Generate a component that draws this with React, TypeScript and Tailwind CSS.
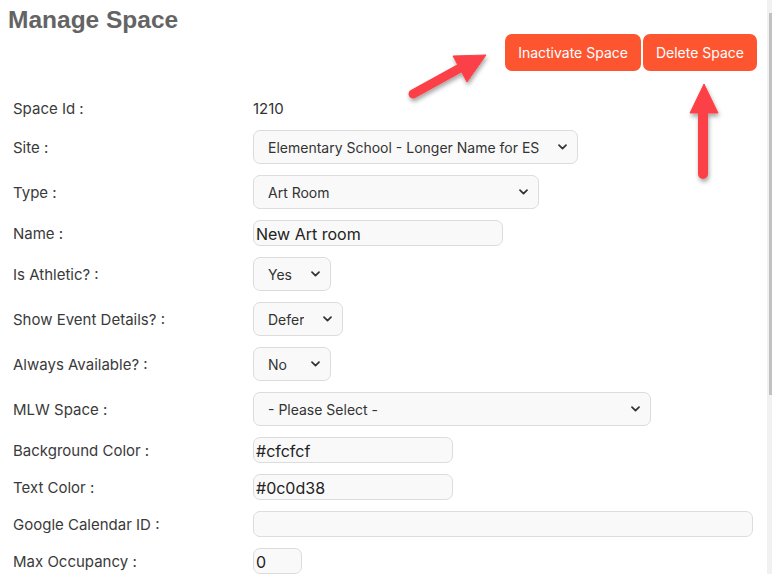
import React from "react";

const labelCls = "w-[240px] shrink-0 pt-[2px] text-[15px] text-[#3a3a3a]";

function Chevron() {
  return (
    <svg width="9" height="6" viewBox="0 0 9 6" className="shrink-0">
      <path d="M1 1.2l3.5 3.5 3.5-3.5" fill="none" stroke="#333" strokeWidth="1.7" strokeLinecap="round" strokeLinejoin="round" />
    </svg>
  );
}

function FakeSelect({ value, width }: { value: string; width: string }) {
  return (
    <div
      className={`${width} h-[34px] flex items-center justify-between pl-[14px] pr-[10px] border border-[#dcdcdc] rounded-[7px] bg-[#f9f9f9] text-[14px] text-[#333]`}
    >
      <span className="truncate pt-px">{value}</span>
      <Chevron />
    </div>
  );
}

function FakeInput({ value, width }: { value: string; width: string }) {
  return (
    <div
      className={`${width} h-[26px] flex items-center px-[2px] pt-px border border-[#dcdcdc] rounded-[7px] bg-[#f9f9f9] text-[16px] text-[#222]`}
    >
      {value}
    </div>
  );
}

function Row({ label, children }: { label: string; children: React.ReactNode }) {
  return (
    <div className="flex items-center">
      <div className={labelCls}>{label}</div>
      {children}
    </div>
  );
}

function Arrows() {
  return (
    <svg className="absolute left-0 top-0 pointer-events-none" width="767" height="200">
      <defs>
        <filter id="sh" x="-30%" y="-30%" width="160%" height="160%">
          <feDropShadow dx="1" dy="3" stdDeviation="2" floodColor="#000" floodOpacity="0.35" />
        </filter>
      </defs>
      <g filter="url(#sh)" fill="#fc4146" stroke="#fc4146">
        <line x1="413" y1="94" x2="462" y2="67" strokeWidth="9" strokeLinecap="round" />
        <polygon points="486,55 453,56 467,82" strokeWidth="1" strokeLinejoin="round" />
        <line x1="703" y1="174" x2="703" y2="110" strokeWidth="10" strokeLinecap="round" />
        <polygon points="704,84 690,113 718,113" strokeWidth="1" strokeLinejoin="round" />
      </g>
    </svg>
  );
}

export default function App() {
  return (
    <div className="w-[772px] h-[574px] flex overflow-hidden bg-white" style={{ fontFamily: "Inter, 'Liberation Sans', sans-serif" }}>
      <div className="relative flex-1 flex flex-col">
        {/* Header */}
        <h1
          className="mt-[8px] pl-[8px] text-[24.5px] leading-[24px] font-bold text-[#646464]"
          style={{ fontFamily: "'Liberation Sans', Arial, sans-serif" }}
        >
          Manage Space
        </h1>
        <div className="mt-[2px] pr-[10px] flex justify-end gap-[2px]">
          <button className="h-[37px] px-[13px] rounded-[7px] bg-[#fe5531] text-white text-[14px]">
            Inactivate Space
          </button>
          <button className="h-[37px] px-[13px] rounded-[7px] bg-[#fe5531] text-white text-[14px]">
            Delete Space
          </button>
        </div>

        {/* Form */}
        <div className="mt-[26px] pl-[13px] flex flex-col gap-[11px]">
          <div className="flex items-center h-[22px]">
            <div className={labelCls}>Space Id :</div>
            <div className="pt-[2px] text-[15px] text-[#333]">1210</div>
          </div>
          <Row label="Site :">
            <FakeSelect value="Elementary School - Longer Name for ES" width="w-[325px]" />
          </Row>
          <Row label="Type :">
            <FakeSelect value="Art Room" width="w-[286px]" />
          </Row>
          <Row label="Name :">
            <FakeInput value="New Art room" width="w-[250px]" />
          </Row>
          <Row label="Is Athletic? :">
            <FakeSelect value="Yes" width="w-[78px]" />
          </Row>
          <Row label="Show Event Details? :">
            <FakeSelect value="Defer" width="w-[90px]" />
          </Row>
          <Row label="Always Available? :">
            <FakeSelect value="No" width="w-[78px]" />
          </Row>
          <Row label="MLW Space :">
            <FakeSelect value="- Please Select -" width="w-[398px]" />
          </Row>
          <Row label="Background Color :">
            <FakeInput value="#cfcfcf" width="w-[200px]" />
          </Row>
          <Row label="Text Color :">
            <FakeInput value="#0c0d38" width="w-[200px]" />
          </Row>
          <Row label="Google Calendar ID :">
            <FakeInput value="" width="w-[500px]" />
          </Row>
          <Row label="Max Occupancy :">
            <FakeInput value="0" width="w-[49px]" />
          </Row>
        </div>

        <Arrows />
      </div>

      {/* Scrollbar */}
      <div className="w-[5px] shrink-0 bg-[#f1f1f1] flex justify-end">
        <div className="mt-[13px] w-[3px] h-[382px] bg-[#c1c1c1]" />
      </div>
    </div>
  );
}
